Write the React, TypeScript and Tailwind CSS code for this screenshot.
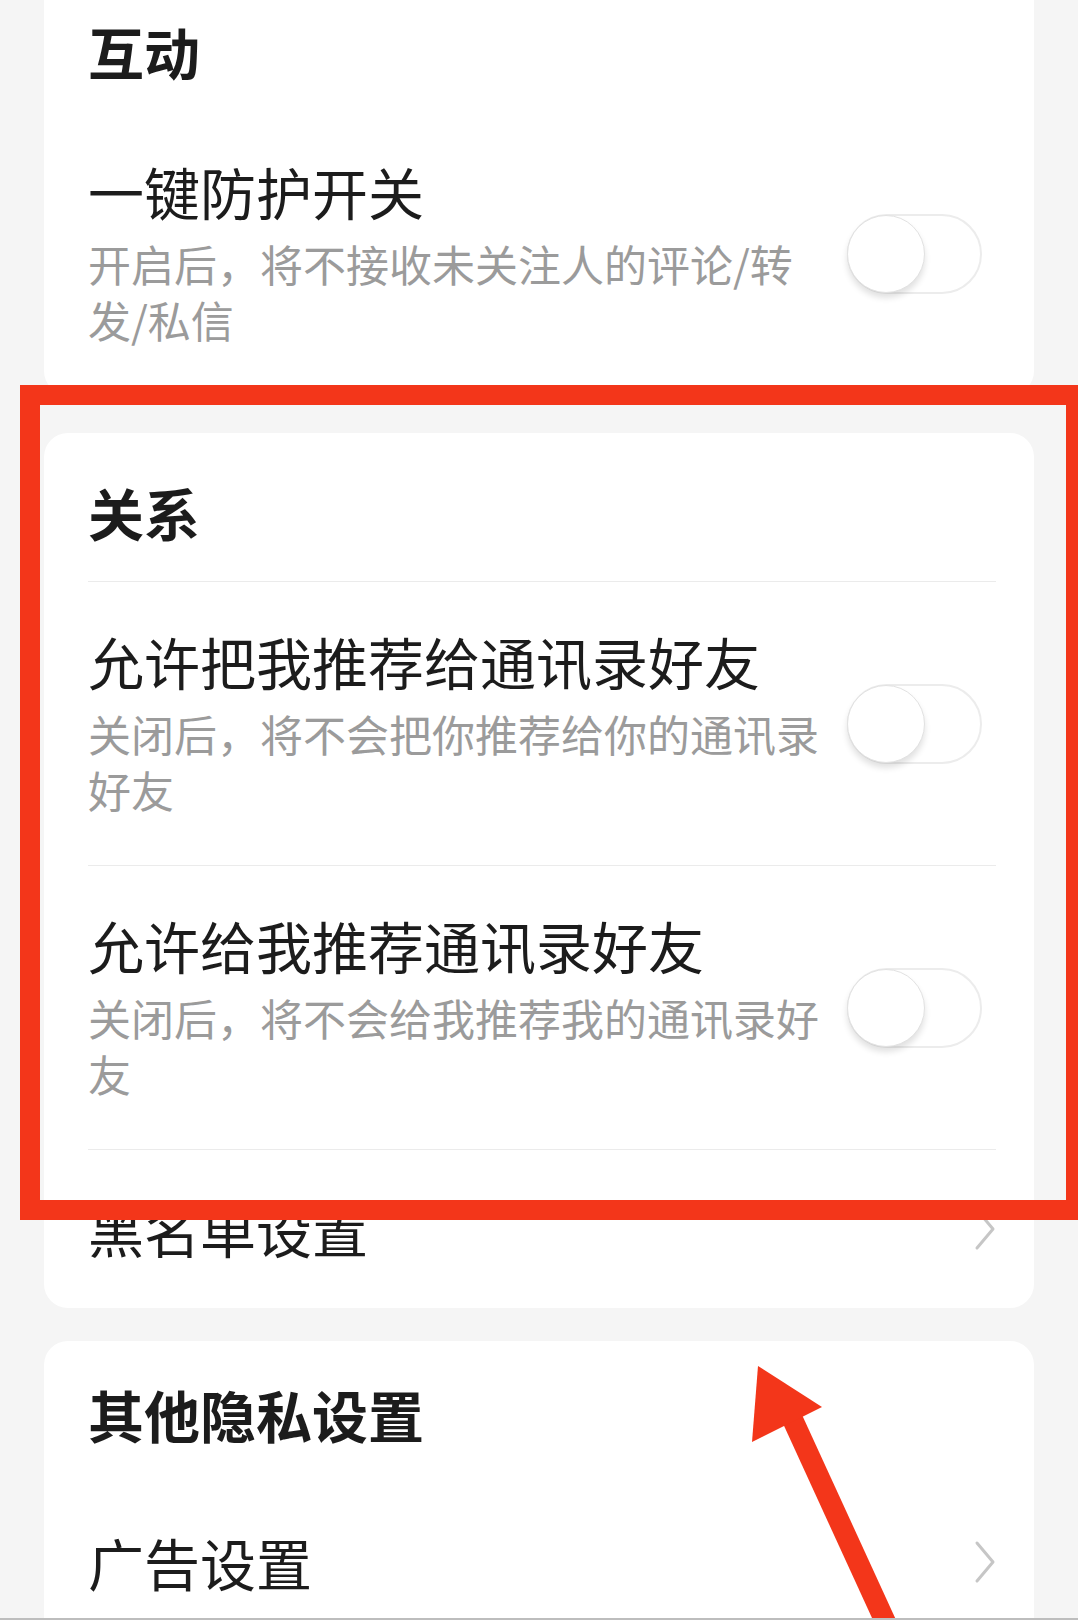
import type { ReactNode } from "react";

type SwitchRowProps = {
  title: string;
  description: string;
};

function Switch() {
  return (
    <div className="mr-[14px] flex h-[80px] w-[135px] shrink-0 items-center rounded-full border-2 border-[#ececec] bg-white">
      <div className="-ml-[2px] h-[78px] w-[78px] rounded-full border border-[#e2e2e2] bg-white shadow-[0_5px_6px_rgba(0,0,0,0.12)]" />
    </div>
  );
}

function Chevron() {
  return (
    <svg width="22" height="44" viewBox="0 0 22 44" className="shrink-0" fill="none">
      <polyline points="3,3 19,22 3,41" stroke="#c6c6c6" strokeWidth="3" strokeLinecap="round" strokeLinejoin="round" />
    </svg>
  );
}

function SectionHeader({ children, className }: { children: ReactNode; className: string }) {
  return (
    <div className={className}>
      <h2 className="text-[56px] font-bold leading-[78px] text-[#1c1c1c]">{children}</h2>
    </div>
  );
}

function SwitchRow({ title, description }: SwitchRowProps) {
  return (
    <div className="flex h-[283px] items-center">
      <div className="w-[740px] shrink-0 pb-[8px]">
        <div className="text-[56px] leading-[78px] text-[#1c1c1c]">{title}</div>
        <p className="mt-[5px] text-[43px] leading-[56px] text-[#9b9b9b]">{description}</p>
      </div>
      <div className="ml-auto">
        <Switch />
      </div>
    </div>
  );
}

function LinkRow({ title }: { title: string }) {
  return (
    <div className="flex h-[158px] items-center justify-between">
      <span className="text-[56px] leading-[78px] text-[#1c1c1c]">{title}</span>
      <Chevron />
    </div>
  );
}

function Divider() {
  return <div className="h-px bg-[#ebebeb]" />;
}

export default function App() {
  return (
    <div className="relative h-[1620px] w-[1078px] overflow-hidden bg-[#f5f5f5] font-['Noto_Sans_CJK_SC','Noto_Sans',sans-serif]">
      <div className="flex flex-col px-[44px]">
        <section className="-mt-[28px] rounded-b-[24px] bg-white pl-[44px] pr-[38px]">
          <SectionHeader className="h-[140px] pt-[40px]">互动</SectionHeader>
          <SwitchRow title="一键防护开关" description="开启后，将不接收未关注人的评论/转发/私信" />
        </section>

        <section className="mt-[38px] rounded-[24px] bg-white pl-[44px] pr-[38px]">
          <SectionHeader className="h-[148px] pt-[40px]">关系</SectionHeader>
          <Divider />
          <SwitchRow title="允许把我推荐给通讯录好友" description="关闭后，将不会把你推荐给你的通讯录好友" />
          <Divider />
          <SwitchRow title="允许给我推荐通讯录好友" description="关闭后，将不会给我推荐我的通讯录好友" />
          <Divider />
          <LinkRow title="黑名单设置" />
        </section>

        <section className="mt-[33px] rounded-[24px] bg-white pl-[44px] pr-[38px]">
          <SectionHeader className="h-[142px] pt-[34px]">其他隐私设置</SectionHeader>
          <LinkRow title="广告设置" />
        </section>
      </div>

      {/* highlight frame around the 关系 section */}
      <div className="absolute left-[20px] top-[385px] h-[835px] w-[1066px] border-[20px] border-[#f3361a]" />

      {/* pointer arrow */}
      <svg className="absolute left-0 top-0" width="1078" height="1620" viewBox="0 0 1078 1620" fill="none">
        <line x1="786" y1="1405" x2="890" y2="1632" stroke="#f3361a" strokeWidth="21" />
        <polygon points="758,1366 752,1442 822,1407" fill="#f3361a" />
      </svg>

      <div className="absolute bottom-0 left-0 h-[2px] w-full bg-[#bdbdbd]" />
    </div>
  );
}
